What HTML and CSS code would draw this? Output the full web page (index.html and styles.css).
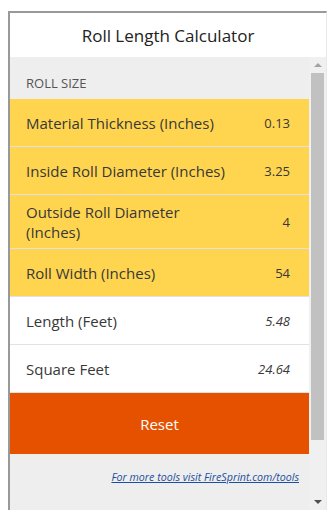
FILE: index.html
```html
<!DOCTYPE html>
<html lang="en">
<head>
  <meta charset="UTF-8">
  <meta name="viewport" content="width=device-width, initial-scale=1.0">
  <title>Roll Length Calculator</title>
  <link rel="stylesheet" href="styles.css">
</head>
<body>
  <div class="calculator">
    <div class="header">Roll Length Calculator</div>
    <div class="body">
      <div class="content">
        <div class="section-label">ROLL SIZE</div>
        <div class="row input">
          <span class="label">Material Thickness (Inches)</span>
          <span class="value">0.13</span>
        </div>
        <div class="row input">
          <span class="label">Inside Roll Diameter (Inches)</span>
          <span class="value">3.25</span>
        </div>
        <div class="row input">
          <span class="label">Outside Roll Diameter (Inches)</span>
          <span class="value">4</span>
        </div>
        <div class="row input">
          <span class="label">Roll Width (Inches)</span>
          <span class="value">54</span>
        </div>
        <div class="row result">
          <span class="label">Length (Feet)</span>
          <span class="value">5.48</span>
        </div>
        <div class="row result">
          <span class="label">Square Feet</span>
          <span class="value">24.64</span>
        </div>
        <button class="reset">Reset</button>
        <div class="footer">
          <a href="#">For more tools visit FireSprint.com/tools</a>
        </div>
      </div>
      <div class="scrollbar">
        <div class="arrow up"></div>
        <div class="track"><div class="thumb"></div></div>
        <div class="arrow down"></div>
      </div>
    </div>
  </div>
</body>
</html>
```

FILE: styles.css
```css
* {
  margin: 0;
  padding: 0;
  box-sizing: border-box;
}

body {
  background-color: #fff;
  font-family: "Open Sans", Arial, sans-serif;
  color: #383838;
}

.calculator {
  margin: 11px 0 0 8px;
  width: 319px;
  height: 499px;
  border-top: 2px solid #999;
  border-left: 2px solid #999;
  border-right: 1px solid #e8e8e8;
  display: flex;
  flex-direction: column;
}

.header {
  height: 44px;
  flex-shrink: 0;
  display: flex;
  align-items: center;
  justify-content: center;
  font-size: 17px;
  color: #222;
  background-color: #fff;
}

.body {
  flex: 1;
  min-height: 0;
  display: flex;
  background-color: #eee;
}

.content {
  flex: 1;
  overflow: hidden;
}

.scrollbar {
  width: 17px;
  flex-shrink: 0;
  display: flex;
  flex-direction: column;
  background-color: #f0f0f0;
}

.arrow {
  height: 16px;
  flex-shrink: 0;
  display: flex;
  align-items: center;
  justify-content: center;
}

.arrow::before {
  content: "";
  width: 0;
  height: 0;
  border-left: 4px solid transparent;
  border-right: 4px solid transparent;
}

.arrow.up::before {
  border-bottom: 4px solid #a3a3a3;
}

.arrow.down::before {
  border-top: 4px solid #505050;
}

.track {
  flex: 1;
  padding: 0 2px;
}

.thumb {
  height: 367px;
  background-color: #c1c1c1;
}

.section-label {
  height: 42px;
  padding: 0 16px 7px;
  display: flex;
  align-items: flex-end;
  font-size: 13px;
  color: #555;
}

.row {
  min-height: 48px;
  padding: 7px 19px 6px 16px;
  display: flex;
  align-items: center;
  justify-content: space-between;
  border-bottom: 1px solid #e2e2e2;
}

.row.input {
  background-color: #ffd54f;
}

.row.result {
  background-color: #fff;
}

.label {
  max-width: 204px;
  font-size: 15px;
  line-height: 20px;
}

.value {
  font-size: 13px;
}

.result .value {
  font-style: italic;
}

.reset {
  display: block;
  width: 100%;
  height: 61px;
  border: none;
  background-color: #e65100;
  color: #fff;
  font-family: inherit;
  font-size: 15px;
  cursor: pointer;
}

.footer {
  padding: 16px 10px 90px;
  text-align: right;
  font-size: 10.7px;
}

.footer a {
  color: #1d4f9e;
  font-style: italic;
}
```
